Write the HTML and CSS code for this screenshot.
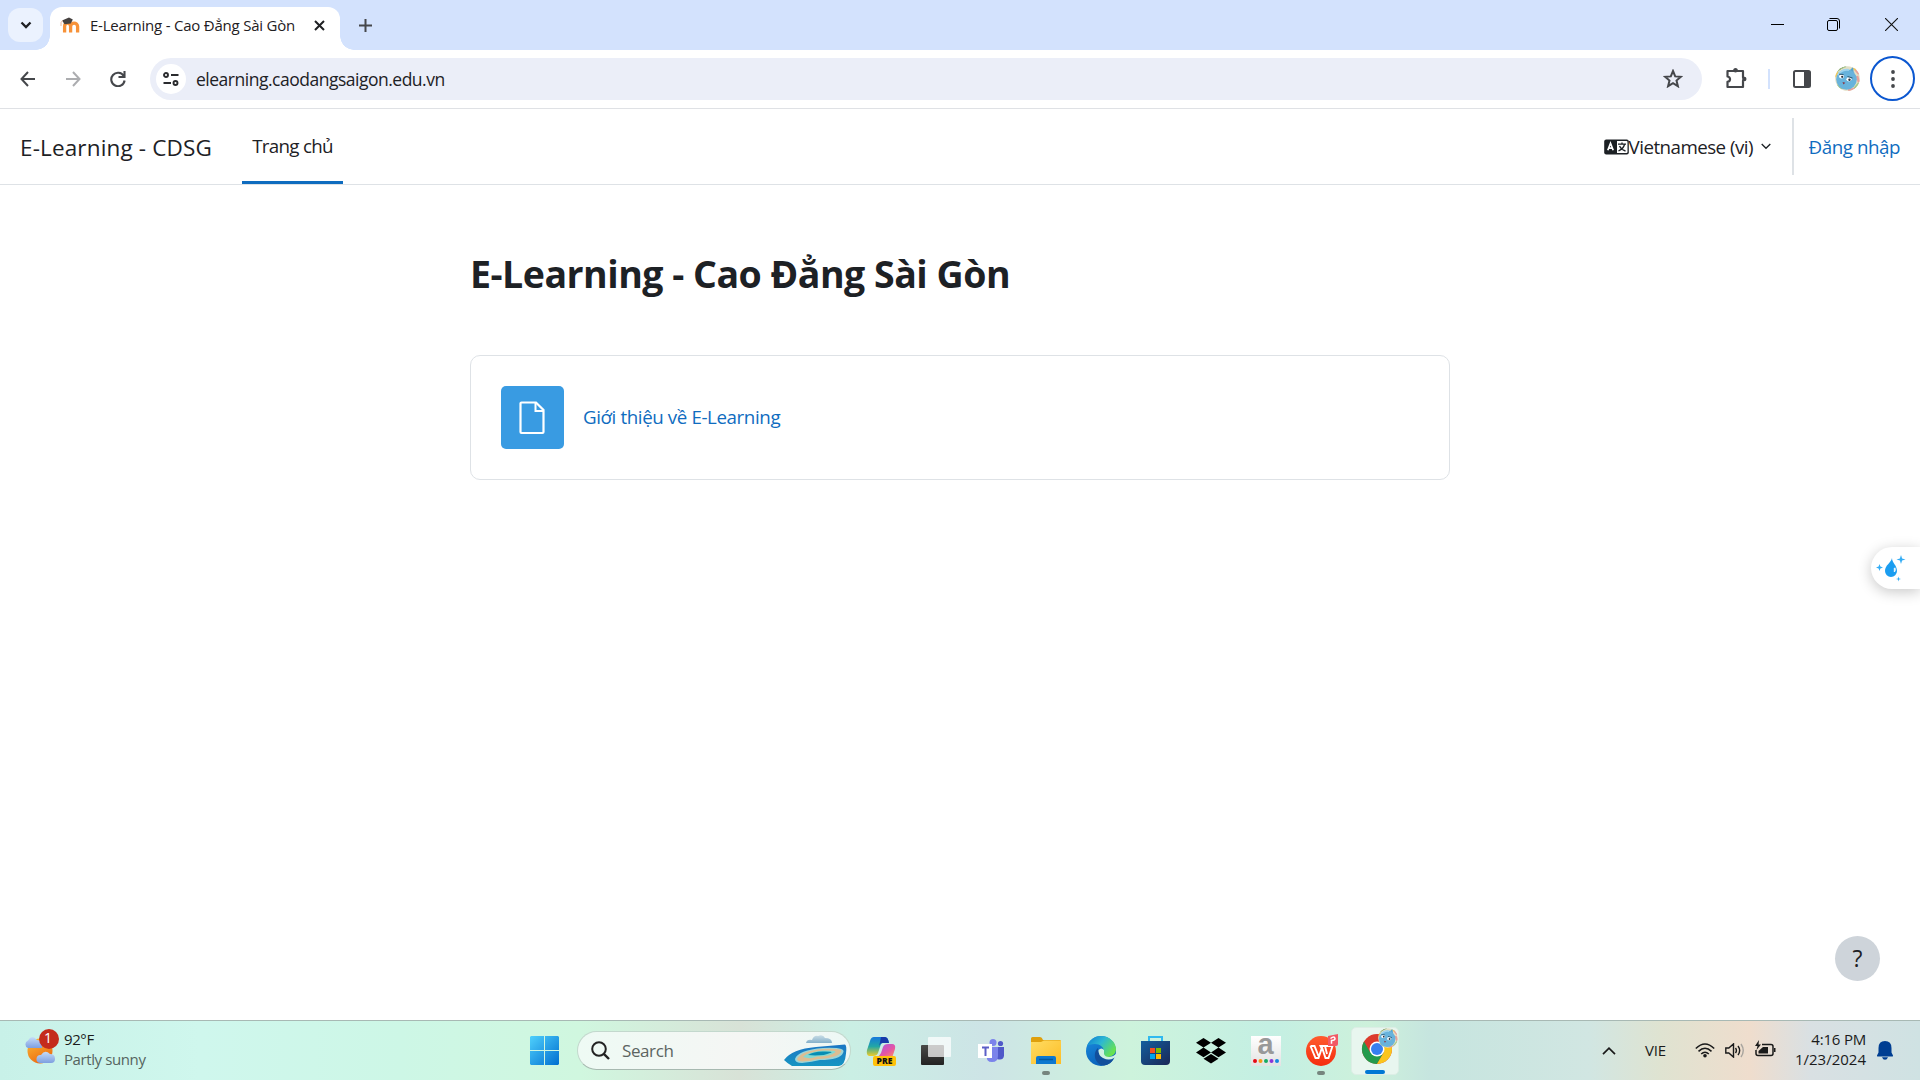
FILE: index.html
```
<!DOCTYPE html>
<html lang="vi">
<head>
<meta charset="utf-8">
<title>E-Learning - Cao Đẳng Sài Gòn</title>
<link rel="stylesheet" href="styles.css">
</head>
<body>
<svg class="defs" width="0" height="0" aria-hidden="true">
  <defs>
    <clipPath id="faceClip"><circle cx="12.5" cy="12.5" r="12.3"/></clipPath>
    <symbol id="avatar" viewBox="0 0 25 25">
      <g clip-path="url(#faceClip)">
        <rect width="25" height="25" fill="#e3dfc4"/>
        <path d="M1 6l5-4 5-2M2 19l5 4M19 23l5-6" stroke="#a5c98c" stroke-width="2"/>
        <path d="M20 3l4 5M22 10l2 6M13 24l7-1" stroke="#e9a09a" stroke-width="2.500"/>
        <path d="M0 11l3-5M18 2l3 2" stroke="#f2c75a" stroke-width="2"/>
        <path d="M14 5l4-4 1 7z" fill="#55a4cf"/>
        <circle cx="11.500" cy="13.500" r="10.300" fill="#68b3dc"/>
        <path d="M3 9c2-4 7-6 11-5" stroke="#9fd4ee" stroke-width="2" fill="none"/>
        <ellipse cx="6.500" cy="10.500" rx="2.400" ry="1.900" fill="#fff"/><ellipse cx="14" cy="13.300" rx="2.600" ry="2.100" fill="#fff"/>
        <circle cx="7.200" cy="10.800" r="1.100" fill="#29303b"/><circle cx="14.500" cy="13.800" r="1.200" fill="#29303b"/>
        <path d="M4 8.200l4.500.3M12.500 10.500l5 1.500" stroke="#264f68" stroke-width=".9"/>
        <path d="M7.500 16l2.800.8-1.800 1.600z" fill="#8b3340"/>
      </g>
    </symbol>
  </defs>
</svg>

<header class="tabstrip">
  <button class="tab-search"><svg width="12" height="8" viewBox="0 0 12 8"><path d="M1.500 1.500L6 6l4.500-4.500" fill="none" stroke="#1f2023" stroke-width="2.300"/></svg></button>
  <div class="tab">
    <svg width="20" height="17" viewBox="0 0 20 17"><path d="M4.600 15.500V9.500c0-4.500 6-4.500 6 0v6m0-6c0-4.500 7-4.500 7 0v6" fill="none" stroke="#f79239" stroke-width="3.300"/><path d="M2 3.500L9 .6l3.800 2-2 3.800-6.200.8z" fill="#45413f"/><path d="M2.500 3.500Q.3 5 1 9" fill="none" stroke="#eeb9a0" stroke-width="1"/></svg>
    <span class="tab-title">E-Learning - Cao Đẳng Sài Gòn</span>
    <svg class="tab-close" width="11" height="11" viewBox="0 0 11 11"><path d="M1 1l9 9M10 1l-9 9" stroke="#1f2023" stroke-width="2"/></svg>
  </div>
  <svg class="new-tab" width="13" height="13" viewBox="0 0 13 13"><path d="M6.500 0v13M0 6.500h13" stroke="#45474b" stroke-width="2"/></svg>
  <div class="window-buttons">
    <svg width="13" height="13" viewBox="0 0 13 13"><path d="M0 6.500h13" stroke="#000"/></svg>
    <svg width="13" height="13" viewBox="0 0 13 13"><rect x=".5" y="2.500" width="10" height="10" rx="1.500" fill="none" stroke="#000"/><path d="M2.500.5H10a2.500 2.500 0 0 1 2.500 2.500v7.500" fill="none" stroke="#000"/></svg>
    <svg class="window-close" width="13" height="13" viewBox="0 0 13 13"><path d="M0 0l13 13M13 0L0 13" stroke="#111" stroke-width="1.100"/></svg>
  </div>
</header>

<div class="toolbar">
  <svg class="nav-icon" width="16" height="16" viewBox="0 0 16 16"><path d="M8 1L1.500 8 8 15M1.500 8H15" fill="none" stroke="#45474b" stroke-width="2"/></svg>
  <svg class="nav-icon" width="16" height="16" viewBox="0 0 16 16"><path d="M8 1l6.500 7L8 15M14.500 8H1" fill="none" stroke="#acadb0" stroke-width="2"/></svg>
  <svg class="nav-icon" width="16" height="16" viewBox="0 0 16 16"><path d="M13.700 5A6.700 6.700 0 1 0 14.600 9.500M14.500 0v6h-6" fill="none" stroke="#45474b" stroke-width="2.100"/></svg>
  <div class="omnibox">
    <span class="site-info"><svg width="16" height="14" viewBox="0 0 16 14"><g fill="none" stroke="#2a2b2e" stroke-width="1.900"><circle cx="3" cy="3" r="2"/><path d="M8 3h7.500M.5 11H8"/><circle cx="12.500" cy="11" r="2"/></g></svg></span>
    <span class="url">elearning.caodangsaigon.edu.vn</span>
    <svg class="star" width="20" height="19" viewBox="0 0 20 19"><path d="M10 2l2.200 5.400 5.700.4-4.400 3.700 1.400 5.700L10 14.100l-4.900 3.100 1.400-5.700-4.400-3.700 5.700-.4z" fill="none" stroke="#45474b" stroke-width="2"/></svg>
  </div>
  <svg class="puzzle" width="21" height="21" viewBox="0 0 21 21"><path d="M2.500 3h5.200a2 2 0 0 1 3.600 0H17v6.200a2 2 0 0 1 0 3.600V19H1.500v-5.200c3.400-.6 3.400-4.500 0-5.300V3z" fill="none" stroke="#45474b" stroke-width="2.200" stroke-linejoin="round"/><circle cx="9.500" cy="2.300" r="2.200" fill="#45474b"/><circle cx="18.300" cy="11" r="2.200" fill="#45474b"/></svg>
  <span class="divider"></span>
  <svg class="side-panel" width="18" height="18" viewBox="0 0 18 18"><rect x="1" y="1" width="16" height="16" rx="1.500" fill="none" stroke="#45474b" stroke-width="2"/><path d="M11 1h6v16h-6z" fill="#45474b"/></svg>
  <svg class="profile" width="25" height="25"><use href="#avatar"/></svg>
  <button class="menu"><svg width="4" height="18" viewBox="0 0 4 18"><g fill="#45474b"><circle cx="2" cy="2" r="1.900"/><circle cx="2" cy="9" r="1.900"/><circle cx="2" cy="16" r="1.900"/></g></svg></button>
</div>

<nav class="navbar">
  <a class="brand">E-Learning - CDSG</a>
  <a class="nav-link"><span>Trang chủ</span></a>
  <div class="nav-right">
    <svg width="25" height="16" viewBox="0 0 25 16"><rect x=".2" y=".5" width="24.600" height="15" rx="2" fill="#1d2125"/><path d="M13 2h9.500a1 1 0 0 1 1 1v10a1 1 0 0 1-1 1H13z" fill="#fff"/><path d="M3.800 11.300l2.700-7 2.700 7M4.800 9.200h3.500" fill="none" stroke="#fff" stroke-width="1.700"/><path d="M14 5.200h8M18 3.500v1.700M20.500 5.500q-1 4-6 6.500M15.500 7q2 4 6 5" fill="none" stroke="#1d2125" stroke-width="1.300"/></svg>
    <span class="lang">Vietnamese (vi)</span>
    <svg class="caret" width="10" height="7" viewBox="0 0 10 7"><path d="M.7 1l4.300 4.300L9.300 1" fill="none" stroke="#1d2125" stroke-width="1.300"/></svg>
    <a class="login"><span>Đăng nhập</span></a>
  </div>
</nav>

<main class="page">
  <h1>E-Learning - Cao Đẳng Sài Gòn</h1>
  <section class="card">
    <span class="activity-icon"><svg width="26" height="34" viewBox="0 0 26 34"><path d="M2.500 1.500h14.500L24.500 9v22a1 1 0 0 1-1 1h-21a1 1 0 0 1-1-1v-28.500a1 1 0 0 1 1-1z" fill="none" stroke="#fff" stroke-width="2.200"/><path d="M16.500 1.500V10h8" fill="none" stroke="#fff" stroke-width="2"/></svg></span>
    <a class="activity-link">Giới thiệu về E-Learning</a>
  </section>
</main>

<aside class="assistant"><svg width="30" height="28" viewBox="0 0 30 28"><path d="M16 3c0 5 5 7 5 13a6 6 0 0 1-12 0c0-6 6-8 7-13z" fill="#1b9df0"/><path d="M19.300 12.500c.8 1.500.8 3.500-.5 4.500h-1v-4z" fill="#e9f6ff"/><g fill="#35adf5"><path d="M25 0l1.100 3.400L29.500 4.500 26.100 5.600 25 9l-1.100-3.400L20.500 4.500l3.400-1.100z"/><path d="M3.500 9l.9 2.600L7 12.500l-2.600.9-.9 2.600-.9-2.600L0 12.500l2.600-.9z"/><path d="M22.500 21.500l.6 1.900 1.900.6-1.900.6-.6 1.900-.6-1.900L20 24l1.900-.6z"/></g></svg></aside>
<button class="help">?</button>

<footer class="taskbar">
  <div class="weather">
    <svg width="36" height="38" viewBox="0 0 36 38">
      <defs><linearGradient id="sun" x2=".5" y2="1"><stop stop-color="#fbbd38"/><stop offset="1" stop-color="#ed6d12"/></linearGradient><linearGradient id="cloud" x2="0" y2="1"><stop stop-color="#c5dcf8"/><stop offset="1" stop-color="#7d9fe0"/></linearGradient></defs>
      <circle cx="15" cy="22" r="12.500" fill="url(#sun)"/><path d="M3 19a4 4 0 0 1 0-7.500Q7 5 12 11q5 0 5 8z" fill="url(#cloud)"/><path d="M15 34a4 4 0 0 1 1-8q4-6 9-1 5 0 5 5 0 4-4 4z" fill="url(#cloud)"/>
      <circle cx="24" cy="10" r="10" fill="#c42b1c"/></svg>
    <b class="badge">1</b>
    <div class="weather-text"><span class="temp">92°F</span><span class="sky">Partly sunny</span></div>
  </div>
  <div class="apps">
    <span class="app start"><svg width="29" height="29" viewBox="0 0 29 29"><defs><linearGradient id="win" x2="1" y2="1"><stop stop-color="#4fd0fc"/><stop offset="1" stop-color="#006fd0"/></linearGradient></defs><path d="M1 0h13v14H0V1zM15 0h13l1 1v13H15zM0 15h14v14H1l-1-1zM15 15h14v13l-1 1H15z" fill="url(#win)"/></svg></span>
    <div class="search">
      <svg width="19" height="19" viewBox="0 0 19 19"><circle cx="8" cy="8" r="6.800" fill="none" stroke="#222" stroke-width="2"/><path d="M12.800 12.800L18 18" stroke="#222" stroke-width="2.400"/></svg>
      <span>Search</span>
      <svg class="island" width="63" height="32" viewBox="0 0 63 32"><defs><linearGradient id="sea" x2="0" y2="1"><stop stop-color="#1b75c4"/><stop offset="1" stop-color="#1695c2"/></linearGradient><linearGradient id="puff" x2="0" y2="1"><stop stop-color="#c9dde6"/><stop offset="1" stop-color="#85b0ca"/></linearGradient></defs><path d="M22 8q1-4 6-3 2-5 6-4 5-2 7 2 7 0 7 5z" fill="url(#puff)"/><path d="M0 25Q8 14 32 12L61 9.500q2 1 1 9-1 12-7 12.500H8Q3 28 0 25z" fill="url(#sea)"/><path d="M11 24q3-9 28-11 24-1 20 5-3 7-23 7-8 2-18 3-7 0-7-4z" fill="#9bd4d7"/><path d="M13 24q4-8 26-10 21-1 18 3-3 6-23 7-7 2-15 2.500-6 0-6-2.500z" fill="#ddbd92"/><path d="M19 22q4-5 20-6.500 15-.5 12 2-5 4-18 4-7 3-14 .5z" fill="#86d9d2"/><path d="M24 20q6-4 17-3.500 10 0 5 1.500-5 2.500-15 2.500z" fill="#078db3"/></svg>
    </div>
    <span class="app"><svg width="30" height="30" viewBox="0 0 30 30"><defs><linearGradient id="cpa" x2="0" y2="1"><stop stop-color="#1578dc"/><stop offset=".5" stop-color="#22a7a5"/><stop offset="1" stop-color="#f0cc27"/></linearGradient><linearGradient id="cpb" x2="1" y2="1"><stop stop-color="#9c55ef"/><stop offset=".6" stop-color="#e656a3"/><stop offset="1" stop-color="#ff9b5b"/></linearGradient></defs><path d="M8 1h11q3 0 4 6h-6q-2 0-3 4l-2 6q-1 3-5 3H3q-3-1-2-6l3-9q1-4 4-4z" fill="url(#cpa)"/><path d="M15 1h4q3 0 4 6h-7q-2 0-3 4z" fill="#173aa9"/><path d="M22 8h4q4 0 3 5l-3 9H9q4-1 6-5l2-6q1-3 5-3z" fill="url(#cpb)"/><rect x="7" y="20" width="23" height="10" rx="2" fill="#ffc20a"/></svg><b class="pre">PRE</b></span>
    <span class="app"><svg width="30" height="28" viewBox="0 0 30 28"><defs><linearGradient id="tv" x2="0" y2="1"><stop stop-color="#4a4a48"/><stop offset="1" stop-color="#222"/></linearGradient></defs><rect y="8" width="23" height="20" rx="1" fill="url(#tv)"/><rect x="7" width="23" height="20" rx="1" fill="#fff" opacity=".72"/></svg></span>
    <span class="app"><svg width="26" height="24" viewBox="0 0 26 24"><circle cx="15" cy="3.500" r="3.500" fill="#7b83eb"/><circle cx="22.500" cy="4.500" r="2.600" fill="#5059c9"/><path d="M18 8h8v9q-1 5-7 3z" fill="#5059c9"/><path d="M9 8h11v9q0 6-6 6t-5-6z" fill="#7b83eb"/><rect y="5" width="14" height="14" fill="#fff"/><path d="M4 8.500h7M7.500 8.500V17" stroke="#5b5fc7" stroke-width="2"/></svg></span>
    <span class="app running"><svg width="30" height="27" viewBox="0 0 30 27"><defs><linearGradient id="fd" x2="1" y2="1"><stop stop-color="#ffdc63"/><stop offset="1" stop-color="#fdbd25"/></linearGradient></defs><path d="M0 8V1.500Q0 0 1.500 0H9q2 0 3 3h17q1 0 1 1.500V8z" fill="#dfa00d"/><path d="M0 5h10l3-1.500h17V27H0z" fill="url(#fd)"/><path d="M5 27v-6q0-2 2-2h16q2 0 2 2v6z" fill="#0d78cf"/><path d="M8 22.500h14" stroke="#05599f" stroke-width="1.500"/></svg></span>
    <span class="app"><svg width="30" height="30" viewBox="0 0 30 30"><defs><linearGradient id="ea" x2="1" y2=".6"><stop stop-color="#0c7bd2"/><stop offset=".5" stop-color="#2db8d2"/><stop offset="1" stop-color="#68e34e"/></linearGradient><linearGradient id="eb" x2=".5" y2="1"><stop stop-color="#1a8de0"/><stop offset="1" stop-color="#0a60b8"/></linearGradient></defs><circle cx="15" cy="15" r="15" fill="url(#eb)"/><path d="M1 10C4 3 10 0 15 0c8 0 15 6 15 13 0 6-5 8-9 8-5 0-3-3-3-5 0-5-4-8-9-8-4 0-7 1-8 2z" fill="url(#ea)"/><path d="M12 12c-6 5-3 17 6 17.500Q25 29 28 22c-4 3-15 2-16-10z" fill="#124f9c"/><path d="M12.500 14q3-3 5.500 0v4q1 3 5 3 4 0 7-3v3l-2 1q-5 3-11 0-5-3-4.500-8z" fill="#d0f1e2"/></svg></span>
    <span class="app"><svg width="29" height="30" viewBox="0 0 29 30"><defs><linearGradient id="st" x2="1" y2="1"><stop stop-color="#125f9e"/><stop offset="1" stop-color="#1b2757"/></linearGradient></defs><path d="M8 7V1h13v6" fill="none" stroke="#30b9ef" stroke-width="2"/><path d="M0 5h29v20q0 4-4 4H4q-4 0-4-4z" fill="url(#st)"/><path d="M9 12h5v5H9z" fill="#f25022"/><path d="M15 12h5v5h-5z" fill="#7fba00"/><path d="M9 18h5v5H9z" fill="#00a4ef"/><path d="M15 18h5v5h-5z" fill="#ffb900"/></svg></span>
    <span class="app"><svg width="30" height="26" viewBox="0 0 30 26"><path d="M7.500 0L15 4.800 7.500 9.600 0 4.800zM22.500 0L30 4.800l-7.500 4.800L15 4.800zM7.500 9.600L15 14.400l-7.500 4.800L0 14.400zM22.500 9.600L30 14.400l-7.500 4.800L15 14.400zM15 16l7.500 4.800L15 25.600 7.500 20.800z"/></svg></span>
    <span class="app"><span class="alexa"><b>a</b><svg width="26" height="4" viewBox="0 0 26 4"><circle cx="2" cy="2" r="2" fill="#e50914"/><circle cx="7.500" cy="2" r="2" fill="#f59b16"/><circle cx="13" cy="2" r="2" fill="#16ab62"/><circle cx="18.500" cy="2" r="2" fill="#8a36d8"/><circle cx="24" cy="2" r="2" fill="#1687e0"/></svg></span></span>
    <span class="app running"><svg width="34" height="34" viewBox="0 0 34 34"><defs><linearGradient id="wp" x2="0" y2="1"><stop stop-color="#ff5b2e"/><stop offset="1" stop-color="#f52d0e"/></linearGradient></defs><circle cx="17" cy="17" r="15" fill="url(#wp)"/><path d="M6.500 12h4l4 10M6.500 12l5 12h3l3.500-10.500 3.500 10.500h3l4-12h-12l1 2M26 12h-5l2 8" fill="none" stroke="#fff" stroke-width="1.900"/><path d="M24 2l10-2v10q0 2-2 2h-8z" fill="#f25964"/><path d="M26.500 4.500q4-3 4.500 0 0 2-3.500 2v3.200" fill="none" stroke="#fff" stroke-width="1.500"/></svg></span>
    <span class="app active"><svg width="38" height="38" viewBox="0 0 38 38"><circle cx="17" cy="21" r="15" fill="#db3a2c"/><path d="M4 13.500A15 15 0 0 0 17 36l7-12-14 0z" fill="#239a4c"/><path d="M32 21a15 15 0 0 1-15 15l7-12-1-6h8.700z" fill="#fbc51d"/><circle cx="17" cy="21" r="7.500" fill="#fff"/><circle cx="17" cy="21" r="6" fill="#367ff0"/><use href="#avatar" x="18" y="0" width="20" height="20"/></svg></span>
  </div>
  <div class="tray">
    <svg class="chevron" width="14" height="8" viewBox="0 0 14 8"><path d="M1 7.200L7 1.200l6 6" fill="none" stroke="#1a1a1a" stroke-width="1.700"/></svg>
    <span class="ime">VIE</span>
    <svg width="20" height="15" viewBox="0 0 20 15"><g fill="none" stroke="#1a1a1a" stroke-width="1.500"><path d="M.8 5.500q9.200-9 18.400 0M3.500 8.400q6.500-6.500 13 0M6.200 11q3.800-3.600 7.600 0"/></g><circle cx="10" cy="12.700" r="1.800" fill="#1a1a1a"/></svg>
    <svg class="volume" width="20" height="15" viewBox="0 0 20 15"><g fill="none" stroke="#1a1a1a" stroke-width="1.400"><path d="M.8 5h3L8.500.9v13.200L3.800 10h-3zM10.500 5q1.800 2.500 0 5M13 3q3.300 4.500 0 9"/><path d="M16 1q4.500 6.500 0 13" stroke="#a9a59f"/></g></svg>
    <svg class="battery" width="21" height="17" viewBox="0 0 21 17"><path d="M7 4.500h9q2 0 2 2v7q0 2-2 2H3q-2 0-2-2V10" fill="none" stroke="#1a1a1a" stroke-width="1.500"/><path d="M8 7h5v6.500H3.500V11zM19 8h1.500v4H19zM4 0L0 6h2.500L1.500 10 6 4.500H3.500z" fill="#1a1a1a"/></svg>
    <div class="clock"><span>4:16 PM</span><span class="date">1/23/2024</span></div>
    <svg class="bell" width="16" height="19" viewBox="0 0 16 19"><path d="M8 0q6.500 0 6.500 7v4.500l1.500 3q.2 1-1 1H1q-1.200 0-1-1l1.500-3V7Q1.500 0 8 0zM5 16.300h6q-1 2.500-3 2.500t-3-2.500z" fill="#003e92"/></svg>
  </div>
</footer>
</body>
</html>
```
FILE: styles.css
```
* { box-sizing: border-box; }
body {
  margin: 0;
  width: 1920px;
  height: 1080px;
  overflow: hidden;
  display: flex;
  flex-direction: column;
  background: #fff;
  color: #1d2125;
  font-family: "Open Sans", "Noto Sans", sans-serif;
}
svg { display: block; flex: none; }
span, a { white-space: nowrap; }
button { border: 0; padding: 0; font: inherit; }
.defs { position: absolute; }

/* browser chrome */
.tabstrip { height: 50px; flex: none; display: flex; align-items: flex-start; background: #d3e2fd; }
.tab-search {
  width: 35px; height: 34px; margin: 8px 0 0 8px;
  display: flex; align-items: center; justify-content: center;
  border-radius: 12px; background: #ebf2fe;
}
.tab {
  position: relative;
  width: 290px; height: 43px; margin: 7px 0 0 7px; padding: 2px 15px 9px 10px;
  display: flex; align-items: center;
  border-radius: 12px 12px 0 0; background: #fff;
}
.tab::before, .tab::after { content: ""; position: absolute; bottom: 0; width: 14px; height: 14px; }
.tab::before { left: -14px; background: radial-gradient(circle at 0 0, transparent 13.5px, #fff 14px); }
.tab::after { right: -14px; background: radial-gradient(circle at 100% 0, transparent 13.5px, #fff 14px); }
.tab-title { margin-left: 10px; font-size: 15px; letter-spacing: -.22px; color: #1f2023; }
.tab-close { margin-left: auto; }
.new-tab { margin: 19px 0 0 19px; }
.window-buttons { margin: 18px 22px 0 auto; display: flex; gap: 43px; }
.window-close { margin-left: 2px; }

.toolbar {
  height: 59px; flex: none; padding: 0 5px 1px 20px;
  display: flex; align-items: center;
  border-bottom: 1px solid #dfe1e5;
  background: #fff;
}
.nav-icon { margin-right: 29px; }
.omnibox {
  width: 1552px; height: 42px; margin-left: -5px; padding: 0 19px 0 6px;
  display: flex; align-items: center;
  border-radius: 21px; background: #ebeef8;
}
.site-info { width: 30px; height: 30px; border-radius: 50%; background: #fff; display: flex; align-items: center; justify-content: center; }
.url { margin-left: 10px; padding-top: 1px; font-size: 17.5px; letter-spacing: -.49px; }
.star { margin-left: auto; }
.puzzle { margin-left: 24px; }
.divider { width: 2px; height: 20px; margin-left: 21px; background: #d3e2fd; }
.side-panel { margin-left: 23px; }
.profile { margin-left: 24px; }
.menu {
  width: 45px; height: 45px; margin-left: auto;
  display: flex; align-items: center; justify-content: center;
  border: 2px solid #0b57d0; border-radius: 50%; background: #fff;
}

/* site navigation */
.navbar { height: 76px; flex: none; padding: 0 20px; display: flex; align-items: center; border-bottom: 1px solid #dee2e6; }
.brand { width: 222px; padding-top: 2px; font-size: 22.5px; letter-spacing: .15px; }
.nav-link {
  width: 101px; height: 75px; padding-top: 1px;
  display: flex; align-items: center; justify-content: center;
  border-bottom: 3px solid #0f6cbf; font-size: 18.75px; letter-spacing: -.7px;
}
.nav-right { margin-left: auto; display: flex; align-items: center; font-size: 18.75px; }
.lang { width: 127px; letter-spacing: -.54px; }
.caret { margin-left: 5px; }
.login {
  height: 57px; margin-left: 21px; padding-left: 15px;
  display: flex; align-items: center;
  border-left: 2px solid #dee2e6; color: #0f6cbf; letter-spacing: -.45px;
}

/* course page */
.page { width: 980px; flex: 1; margin: 0 auto; padding-top: 62px; }
h1 { margin: 0; height: 54px; line-height: 54px; font-size: 37.5px; font-weight: 700; letter-spacing: -.5px; white-space: nowrap; }
.card { height: 125px; margin-top: 54px; padding: 0 30px; display: flex; align-items: center; border: 1px solid #dee2e6; border-radius: 10px; }
.activity-icon { width: 63px; height: 63px; padding-right: 1px; display: flex; align-items: center; justify-content: center; border-radius: 5px; background: #399be2; }
.activity-link { margin-left: 19px; padding-bottom: 2px; font-size: 18.75px; letter-spacing: -.4px; color: #0f6cbf; }

/* floating controls */
.assistant {
  position: absolute; right: 0; top: 547px; width: 49px; height: 42px; padding: 8px 0 0 5px;
  border-radius: 21px 0 0 21px; background: #fff; box-shadow: 0 3px 14px rgba(0, 0, 0, .22);
}
.help {
  position: absolute; left: 1835px; top: 936px; width: 45px; height: 45px;
  border-radius: 50%; background: #ced4da; color: #1d2125; font: 500 23px/45px "Open Sans", sans-serif;
}

/* desktop taskbar */
.taskbar {
  position: relative;
  height: 60px; flex: none; display: flex; align-items: center;
  border-top: 1px solid #a8b9b4; color: #1b1b1b;
  background: linear-gradient(90deg, #c8f1e8 0, #cff7ed 200px, #cdf7e6 400px, #d0f7df 580px, #d8e2d7 740px, #caefe4 850px, #cde4e6 985px, #cdf3dc 1130px, #c4efe3 1270px, #cdf1db 1370px, #c6e5df 1430px, #d1e6e2 1590px, #dfe3d1 1660px, #efddcd 1750px, #d9e0e3 1810px, #cfe2e3 1920px);
}
.weather { position: relative; width: 517px; padding: 0 0 5px 25px; display: flex; align-items: center; }
.badge { position: absolute; left: 38px; top: 0; width: 20px; text-align: center; color: #fff; font-size: 14px; line-height: 20px; font-weight: 400; }
.weather-text { margin-left: 3px; padding-top: 1px; display: flex; flex-direction: column; font-size: 15px; line-height: 20px; }
.temp { letter-spacing: -.4px; }
.sky { color: #55645f; letter-spacing: -.4px; }
.apps { display: flex; align-items: center; }
.app { position: relative; width: 55px; height: 48px; display: flex; align-items: center; justify-content: center; }
.search {
  width: 274px; height: 39px; margin: 0 2px 0 5px; padding: 0 3px 0 13px;
  display: flex; align-items: center;
  border-radius: 20px; border: 1px solid #c3d8cd; border-bottom-color: #a7b9b0;
  background: linear-gradient(90deg, #eefaf4, #f5f6f4 60%, #edf8f5);
  font-size: 17px; color: #5c6461;
}
.search span { margin-left: 12px; letter-spacing: -.4px; }
.island { margin-left: auto; }
.pre { position: absolute; left: 20px; bottom: 9px; width: 23px; text-align: center; font-size: 8.5px; line-height: 10px; font-weight: 800; color: #111; }
.alexa { width: 30px; height: 30px; display: flex; flex-direction: column; align-items: center; background: linear-gradient(#fff, #e2e2e2); }
.alexa b { height: 23px; color: #999; font: 700 29px/17px "Liberation Sans", sans-serif; }
.running::after { content: ""; position: absolute; left: 24px; bottom: 0; width: 8px; height: 4px; border-radius: 2px; background: #76857e; }
.active { width: 48px; margin-left: 3px; padding: 0 0 8px 8px; border: 1px solid #dceee5; border-radius: 5px; background: #e8f6ef; }
.active::after { content: ""; position: absolute; left: 13px; bottom: 0; width: 20px; height: 4px; border-radius: 2px; background: #0078d4; }
.tray { margin-left: auto; padding-right: 27px; display: flex; align-items: center; }
.chevron { margin-right: 29px; }
.ime { width: 50px; padding-bottom: 2px; font-size: 15px; letter-spacing: -.2px; }
.volume { margin-left: 10px; }
.battery { margin: 0 0 4px 10px; }
.clock { width: 90px; padding-bottom: 3px; display: flex; flex-direction: column; align-items: flex-end; font-size: 15px; line-height: 20px; letter-spacing: -.2px; }
.date { letter-spacing: 0; }
.bell { margin-left: 11px; }
```
